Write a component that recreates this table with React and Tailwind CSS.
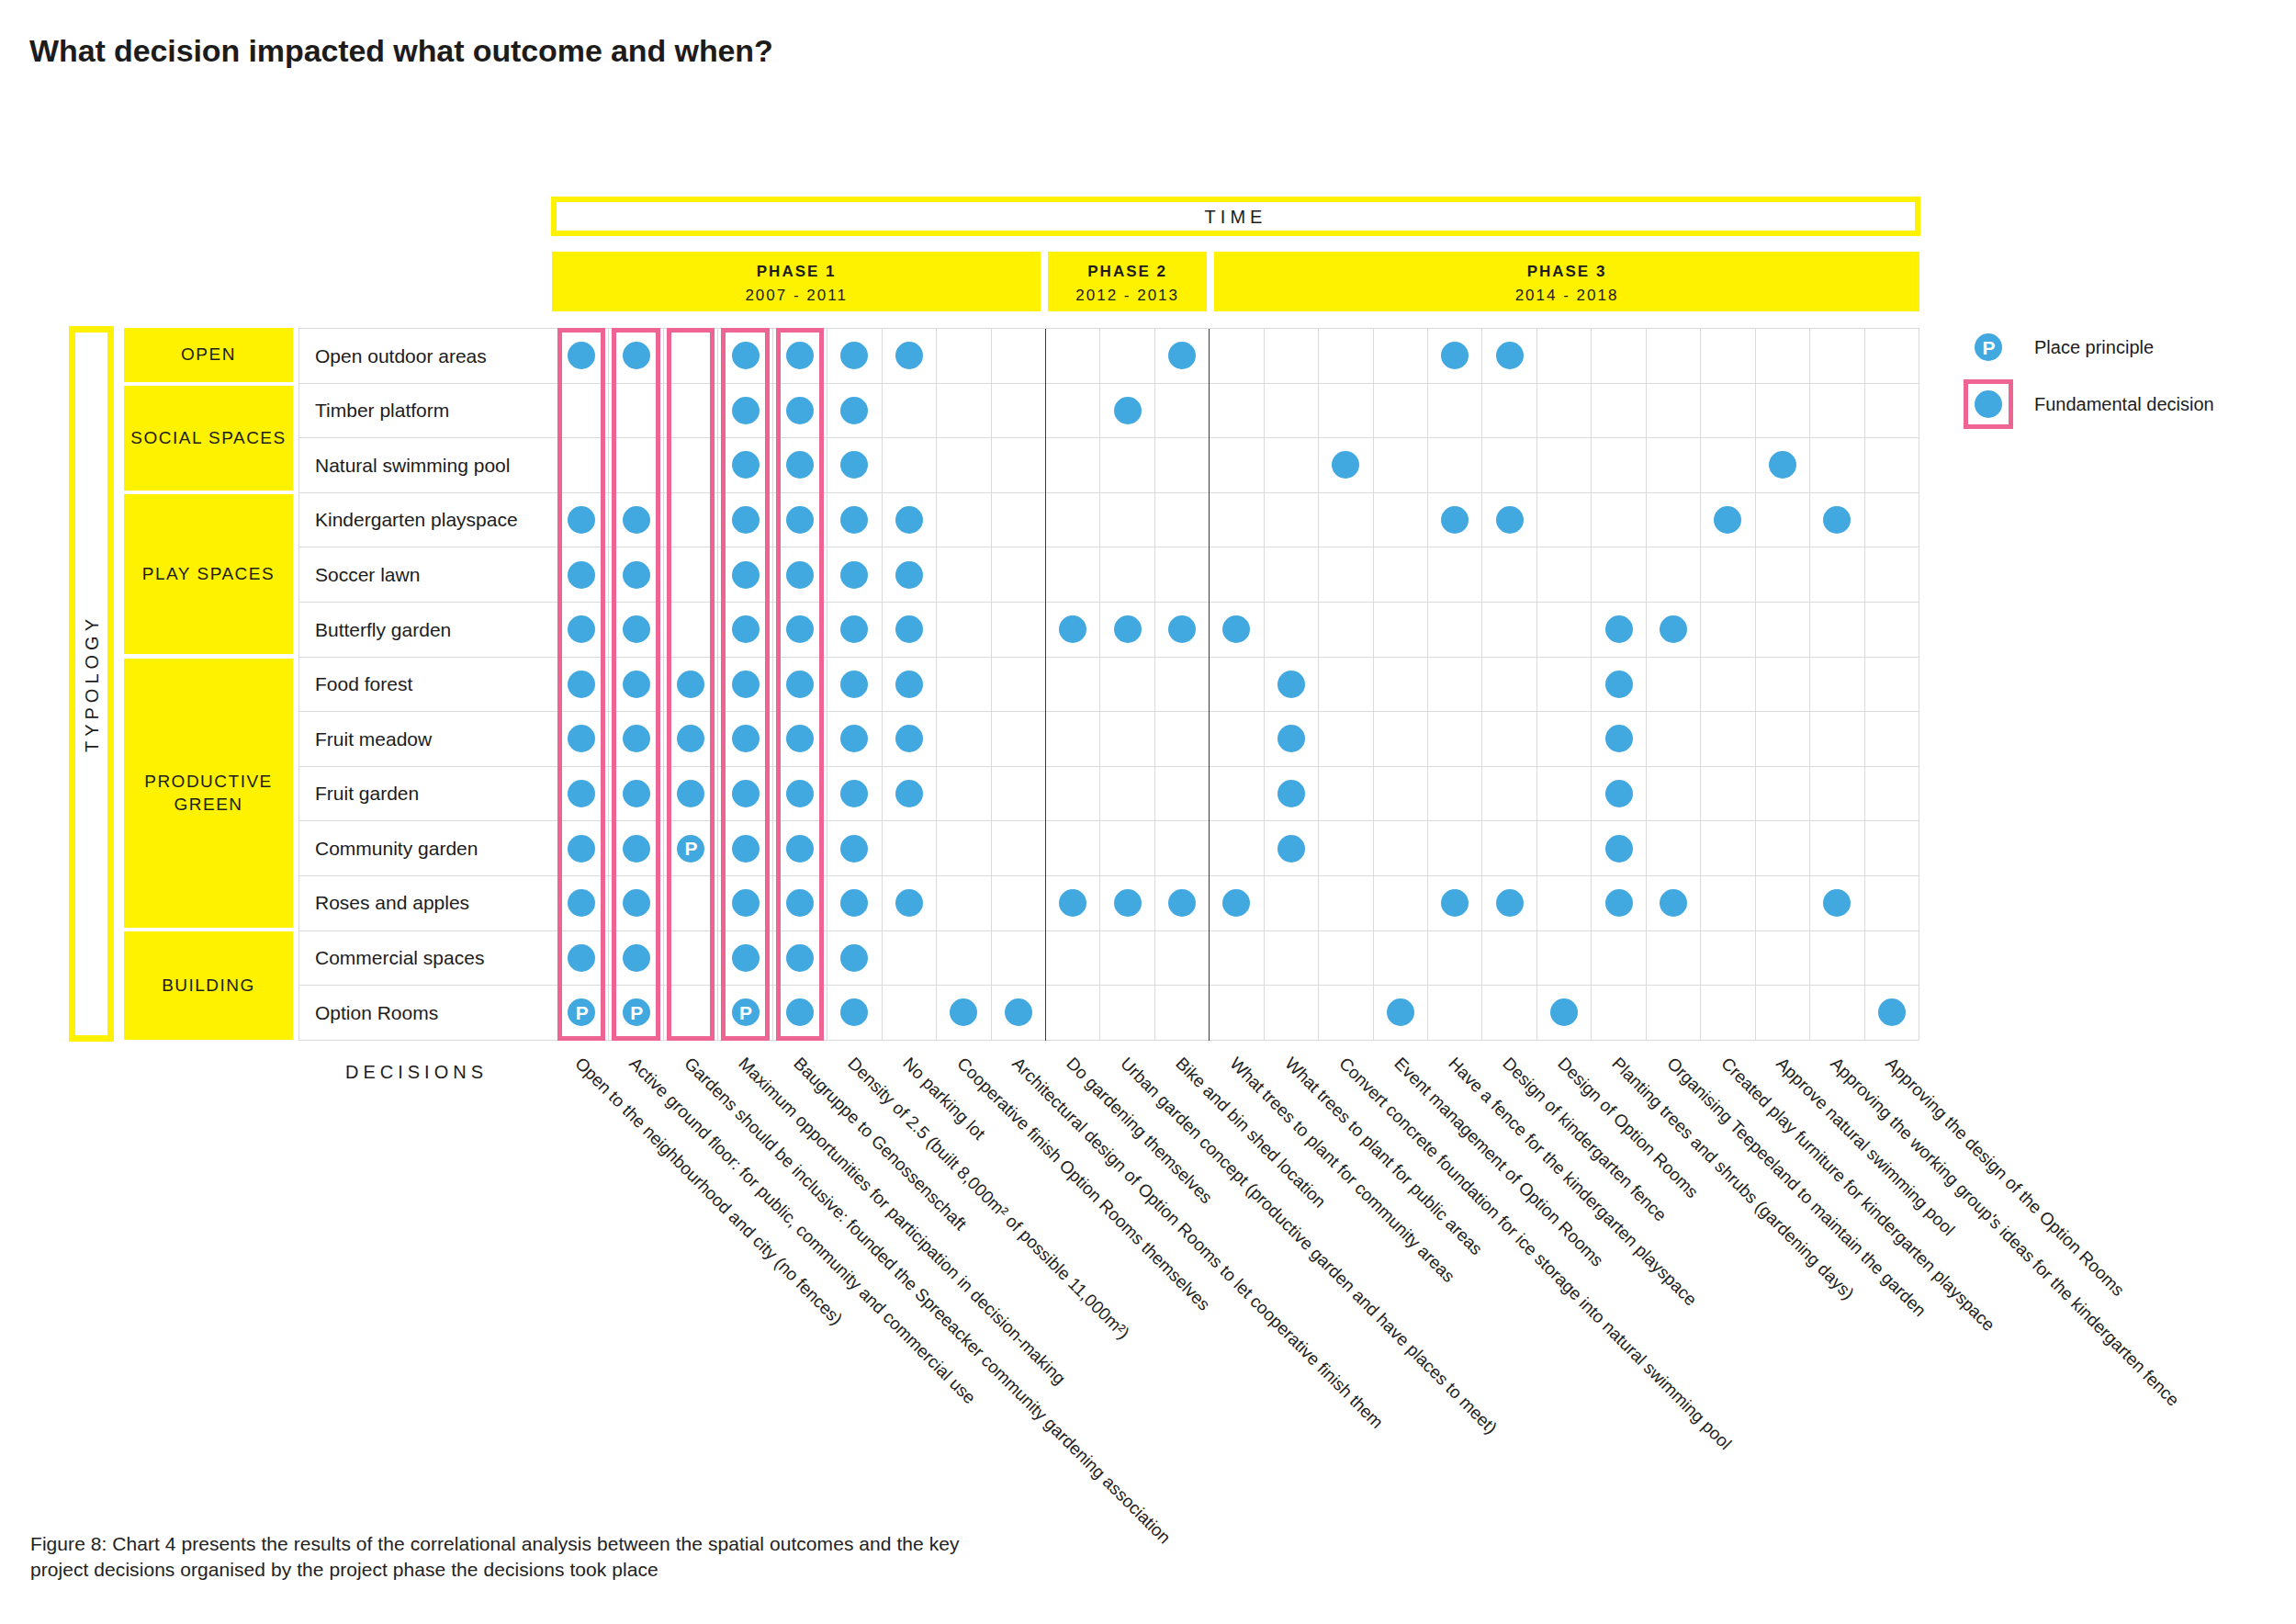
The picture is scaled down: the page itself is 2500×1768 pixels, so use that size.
import React from 'react';
import clsx from 'clsx';

const rows = [
    { label: 'Open outdoor areas', dots: [0, 1, 3, 4, 5, 6, 11, 16, 17] },
    { label: 'Timber platform', dots: [3, 4, 5, 10] },
    { label: 'Natural swimming pool', dots: [3, 4, 5, 14, 22] },
    { label: 'Kindergarten playspace', dots: [0, 1, 3, 4, 5, 6, 16, 17, 21, 23] },
    { label: 'Soccer lawn', dots: [0, 1, 3, 4, 5, 6] },
    { label: 'Butterfly garden', dots: [0, 1, 3, 4, 5, 6, 9, 10, 11, 12, 19, 20] },
    { label: 'Food forest', dots: [0, 1, 2, 3, 4, 5, 6, 13, 19] },
    { label: 'Fruit meadow', dots: [0, 1, 2, 3, 4, 5, 6, 13, 19] },
    { label: 'Fruit garden', dots: [0, 1, 2, 3, 4, 5, 6, 13, 19] },
    { label: 'Community garden', dots: [0, 1, 3, 4, 5, 13, 19], p: [2] },
    { label: 'Roses and apples', dots: [0, 1, 3, 4, 5, 6, 9, 10, 11, 12, 16, 17, 19, 20, 23] },
    { label: 'Commercial spaces', dots: [0, 1, 3, 4, 5] },
    { label: 'Option Rooms', dots: [4, 5, 7, 8, 15, 18, 24], p: [0, 1, 3] },
];

const decisions = [
    'Open to the neighbourhood and city (no fences)',
    'Active ground floor: for public, community and commercial use',
    'Gardens should be inclusive: founded the Spreeacker community gardening association',
    'Maximum opportunities for participation in decision-making',
    'Baugruppe to Genossenschaft',
    'Density of 2.5 (built 8,000m² of possible 11,000m²)',
    'No parking lot',
    'Cooperative finish Option Rooms themselves',
    'Architectural design of Option Rooms to let cooperative finish them',
    'Do gardening themselves',
    'Urban garden concept (productive garden and have places to meet)',
    'Bike and bin shed location',
    'What trees to plant for community areas',
    'What trees to plant for public areas',
    'Convert concrete foundation for ice storage into natural swimming pool',
    'Event management of Option Rooms',
    'Have a fence for the kindergarten playspace',
    'Design of kindergarten fence',
    'Design of Option Rooms',
    'Planting trees and shrubs (gardening days)',
    'Organising Teepeeland to maintain the garden',
    'Created play furniture for kindergarten playspace',
    'Approve natural swimming pool',
    "Approving the working group's ideas for the kindergarten fence",
    'Approving the design of the Option Rooms',
];

// typology groups, heights follow the rows they cover
const groups = [
    { name: ['OPEN'], h: 'h-[59px]' },
    { name: ['SOCIAL SPACES'], h: 'h-[114px]' },
    { name: ['PLAY SPACES'], h: 'h-[174px]' },
    { name: ['PRODUCTIVE', 'GREEN'], h: 'h-[293px]' },
    { name: ['BUILDING'], h: 'h-[118px]' },
];

const phases = [
    { title: 'PHASE 1', years: '2007 - 2011', w: 'w-[533px]' },
    { title: 'PHASE 2', years: '2012 - 2013', w: 'w-[173px]' },
    { title: 'PHASE 3', years: '2014 - 2018', w: 'w-[769px]' },
];

const Dot = () => <div className="w-[30px] h-[30px] rounded-full bg-[#41a8e0]" />;

const PDot = () => (
    <div className="w-[30px] h-[30px] rounded-full bg-[#41a8e0] flex items-center justify-center text-white font-bold text-[21px] leading-none pl-px">
        P
    </div>
);

const App = () => {
    return (
        <div className="w-[2500px] h-[1768px] bg-white text-[#1c1c1c] font-['Liberation_Sans',Arial,sans-serif] overflow-hidden">

            {/* Title */}
            <h1 className="pt-[38px] pl-[32px] text-[34px] leading-[34px] font-bold tracking-[-0.1px]">
                What decision impacted what outcome and when?
            </h1>

            {/* Chart */}
            <div className="ml-[75px] mt-[142px] grid grid-cols-[529px_1486px_1fr]">

                {/* Time header */}
                <div />
                <div className="-ml-[4px] w-[1491px] h-[43px] border-[6px] border-[#fff200] flex items-center justify-center text-[20px] tracking-[5px] leading-none">
                    TIME
                </div>
                <div />

                {/* Phases */}
                <div />
                <div className="-ml-[3px] mt-[17px] flex gap-2">
                    {phases.map((ph) => (
                        <div key={ph.title} className={clsx(ph.w, 'h-[65px] bg-[#fff200] flex flex-col items-center justify-center pt-[4px]')}>
                            <div className="text-[17px] leading-[26px] font-bold tracking-[2px]">{ph.title}</div>
                            <div className="text-[17px] leading-[26px] tracking-[2px]">{ph.years}</div>
                        </div>
                    ))}
                </div>
                <div />

                {/* Left side: typology, categories, outcomes */}
                <div className="mt-[18px] flex">
                    <div className="w-[49px] -mt-[2px] -mb-[1px] border-[7px] border-[#fff200] flex items-center justify-center">
                        <span className="[writing-mode:vertical-rl] rotate-180 text-[20px] tracking-[5px] leading-none">
                            TYPOLOGY
                        </span>
                    </div>

                    <div className="ml-[11px] w-[184px] flex flex-col gap-[4px]">
                        {groups.map((g, i) => (
                            <div
                                key={i}
                                className={clsx(g.h, i === 3 && 'mt-[1px]', 'bg-[#fff200] flex flex-col items-center justify-center text-[19px] leading-[24.5px] tracking-[1.5px]')}
                            >
                                {g.name.map((n) => <div key={n}>{n}</div>)}
                            </div>
                        ))}
                    </div>

                    <div className="ml-[6px] w-[279px] border-l border-t border-[#dadada] flex flex-col">
                        {rows.map((r) => (
                            <div key={r.label} className="h-[59.6px] border-b border-[#dadada] pl-[17px] flex items-center text-[21px]">
                                {r.label}
                            </div>
                        ))}
                    </div>
                </div>

                {/* Matrix */}
                <div className="mt-[18px] flex border-t border-[#dadada]">
                    {decisions.map((d, ci) => (
                        <div
                            key={ci}
                            className={clsx(
                                'relative w-[59.44px] flex flex-col border-r',
                                ci === 8 || ci === 11 ? 'border-[#3c3c3c]' : 'border-[#dadada]'
                            )}
                        >
                            {rows.map((r, ri) => (
                                <div key={ri} className="h-[59.6px] border-b border-[#dadada] flex items-center justify-center">
                                    {r.p?.includes(ci) ? <PDot /> : r.dots.includes(ci) ? <Dot /> : null}
                                </div>
                            ))}
                            {ci < 5 && (
                                <div className="absolute -top-px bottom-0 left-[3px] right-[3px] border-[5px] border-[#ee6594]" />
                            )}
                        </div>
                    ))}
                </div>

                {/* Legend */}
                <div className="mt-[18px] pl-[48px] pt-[6px] flex flex-col">
                    <div className="flex items-center">
                        <div className="w-[54px] flex justify-center"><PDot /></div>
                        <span className="ml-[23px] text-[20px]">Place principle</span>
                    </div>
                    <div className="mt-[20px] flex items-center">
                        <div className="w-[54px] h-[54px] border-[5px] border-[#ee6594] flex items-center justify-center">
                            <Dot />
                        </div>
                        <span className="ml-[23px] text-[20px]">Fundamental decision</span>
                    </div>
                </div>

                {/* Decisions axis */}
                <div className="pl-[301px] pt-[23px] text-[20px] tracking-[5px] leading-[23px]">
                    DECISIONS
                </div>
                <div className="h-[534px] flex">
                    {decisions.map((d, ci) => (
                        <div key={ci} className="w-[59.44px] shrink-0">
                            <span className="block w-max ml-[33px] mt-[14px] origin-top-left rotate-45 whitespace-nowrap text-[19px] leading-[22px] text-[#222]">
                                {d}
                            </span>
                        </div>
                    ))}
                </div>
                <div />
            </div>

            {/* Caption */}
            <p className="pl-[33px] text-[21px] leading-[28px] tracking-[0.06px] text-[#222]">
                Figure 8: Chart 4 presents the results of the correlational analysis between the spatial outcomes and the key
                <br />
                project decisions organised by the project phase the decisions took place
            </p>
        </div>
    );
};

export default App;
